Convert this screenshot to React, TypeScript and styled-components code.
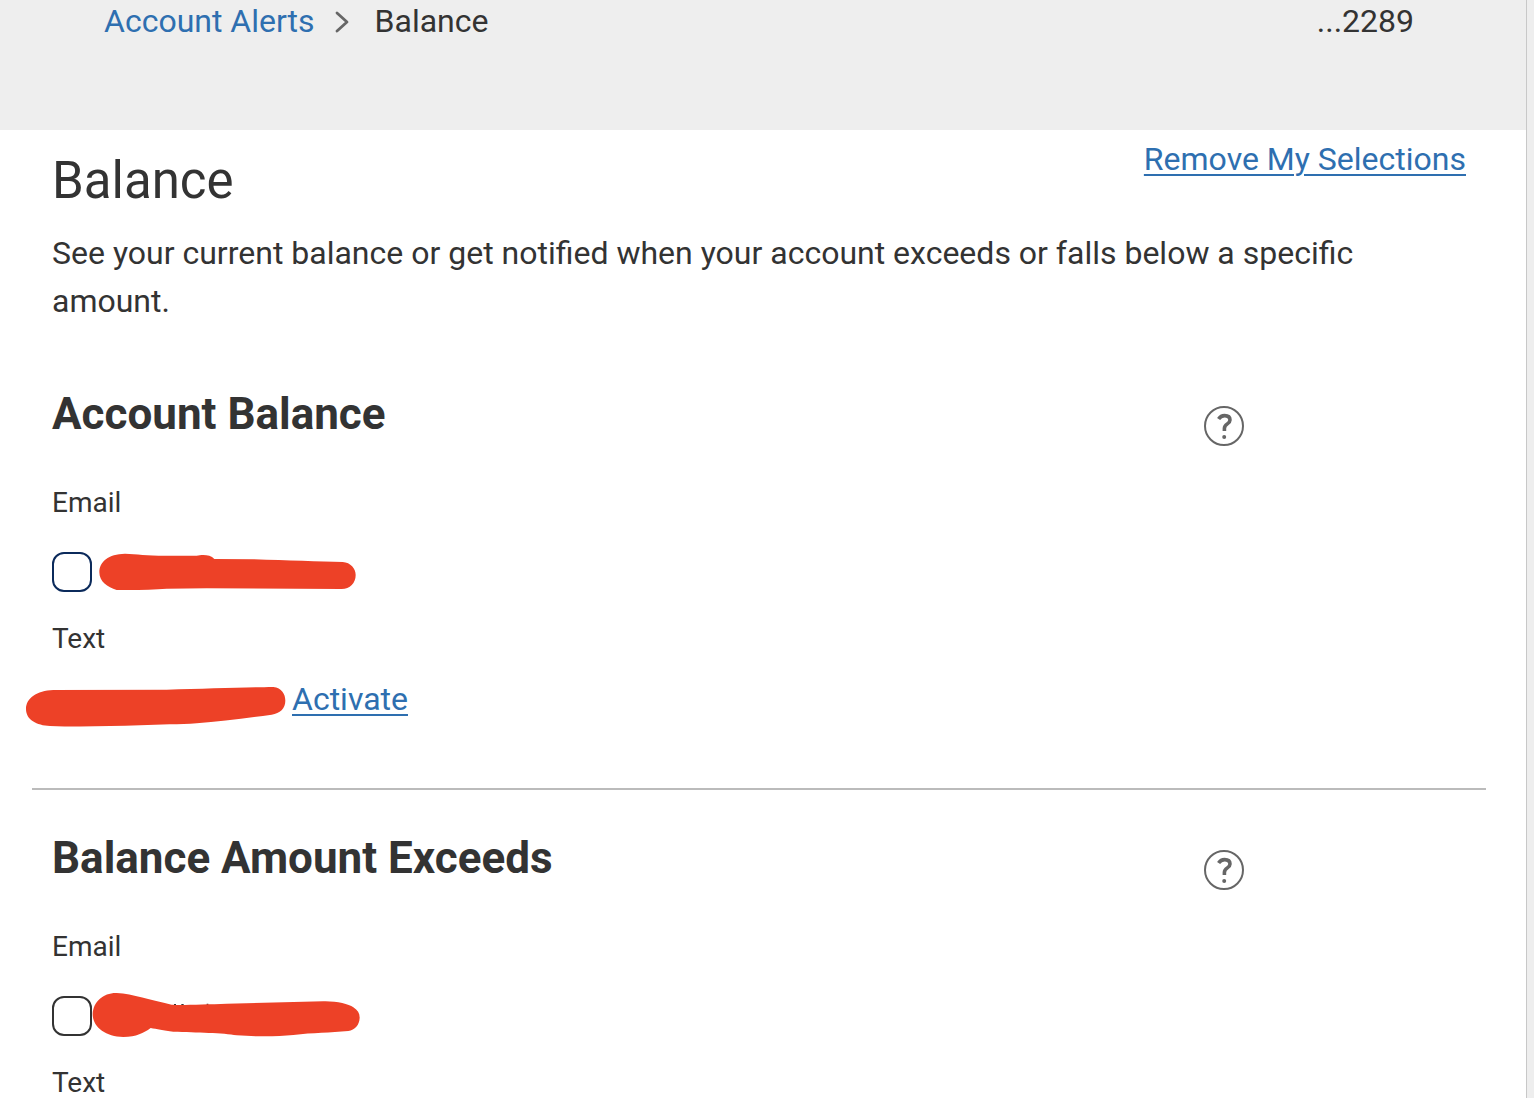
import React from "react";
import styled, { createGlobalStyle } from "styled-components";

const ink = "#333333";
const link = "#2e6fb0";
const redaction = "#ed4127";

const GlobalStyle = createGlobalStyle`
  *, *::before, *::after { box-sizing: border-box; }
  body {
    margin: 0;
    background: #ffffff;
    color: ${ink};
    font-family: Roboto, "Liberation Sans", sans-serif;
    font-size: 32px;
    line-height: 48px;
  }
`;

const Page = styled.div`
  display: flex;
  min-height: 100vh;
`;

const Main = styled.main`
  flex: 1;
  min-width: 0;
`;

const Gutter = styled.div`
  flex: none;
  width: 8px;
  background: #eeeeee;
  border-left: 1px solid #c8c8c8;
`;

const TopBar = styled.header`
  display: flex;
  justify-content: space-between;
  padding: 0 112px 88px 104px;
  background: #eeeeee;
  line-height: 42px;
`;

const Crumbs = styled.nav`
  display: flex;
  align-items: center;
`;

const CrumbArrow = styled.svg`
  margin: 2px 26px 0 20px;
`;

const CrumbLink = styled.a`
  color: ${link};
  text-decoration: none;
`;

const TextLink = styled.a`
  color: ${link};
  text-decoration: underline;
  text-decoration-thickness: 2px;
  text-underline-offset: 4px;
`;

const Content = styled.div`
  padding: 0 40px 0 32px;
`;

const Intro = styled.section`
  padding: 4px 20px 20px;
`;

const IntroHead = styled.div`
  display: flex;
  justify-content: space-between;
  align-items: flex-start;
  line-height: 50px;
`;

const PageTitle = styled.h1`
  margin: 0;
  padding-top: 17px;
  font-size: 51px;
  line-height: 60px;
  font-weight: 400;
`;

const Description = styled.p`
  margin: 18px 0 0;
`;

const AlertSection = styled.section`
  padding: 45px 20px 0;

  & + & {
    border-top: 2px solid #bbbbbb;
    margin-top: 65px;
    padding-top: 44px;
  }
`;

const SectionHead = styled.div`
  display: flex;
  justify-content: space-between;
  align-items: flex-start;
  padding-right: 222px;
`;

const SectionTitle = styled.h2`
  margin: 0;
  font-size: 44px;
  line-height: 48px;
  font-weight: 700;
`;

const HelpButton = styled.button`
  display: block;
  margin: 16px 0 0;
  padding: 0;
  width: 40px;
  height: 40px;
  border: 0;
  background: none;
  cursor: pointer;
`;

const ChannelTitle = styled.h3<{ $top: number }>`
  margin: ${(p) => p.$top}px 0 0;
  font-size: 28px;
  line-height: 30px;
  font-weight: 400;
`;

const Option = styled.label`
  display: flex;
  margin-top: 34px;
  height: 40px;
`;

const Tick = styled.input<{ $edge: string }>`
  appearance: none;
  flex: none;
  margin: 0;
  width: 40px;
  height: 40px;
  border: 2px solid ${(p) => p.$edge};
  border-radius: 12px;
  background: #ffffff;
`;

const PhoneRow = styled.div`
  display: flex;
  margin: 21px 0 0 -28px;
`;

const Scribble = styled.svg`
  display: block;
  flex: none;
  overflow: visible;
  fill: ${redaction};
`;

const HelpIcon = () => (
  <svg width="40" height="40" viewBox="0 0 40 40" fill="none" stroke="#666666" aria-hidden="true">
    <circle cx="20" cy="20" r="19" strokeWidth="2" />
    <path d="M14.6 13C16.2 10.4 18.2 9.6 20.6 9.6C23.8 9.6 26 11.2 26 14C26 18.2 20.4 17.6 20.4 22.4V25" strokeWidth="3.6" />
    <circle cx="20.2" cy="31" r="2" fill="#666666" stroke="none" />
  </svg>
);

const Help = ({ topic }: { topic: string }) => (
  <HelpButton type="button" aria-label={`Help with ${topic}`}>
    <HelpIcon />
  </HelpButton>
);

export default function App() {
  return (
    <>
      <GlobalStyle />
      <Page>
        <Main>
          <TopBar>
            <Crumbs aria-label="Breadcrumb">
              <CrumbLink href="#alerts">Account Alerts</CrumbLink>
              <CrumbArrow width="14" height="22" viewBox="0 0 14 22" fill="none" stroke="#666666" strokeWidth="2.8" aria-hidden="true">
                <path d="M2 2L12 11L2 20" strokeLinejoin="round" strokeLinecap="round" />
              </CrumbArrow>
              <span>Balance</span>
            </Crumbs>
            <span>...2289</span>
          </TopBar>
          <Content>
            <Intro>
              <IntroHead>
                <PageTitle>Balance</PageTitle>
                <TextLink href="#remove">Remove My Selections</TextLink>
              </IntroHead>
              <Description>
                See your current balance or get notified when your account exceeds or falls below a specific amount.
              </Description>
            </Intro>

            <AlertSection>
              <SectionHead>
                <SectionTitle>Account Balance</SectionTitle>
                <Help topic="Account Balance" />
              </SectionHead>
              <ChannelTitle $top={42}>Email</ChannelTitle>
              <Option>
                <Tick type="checkbox" $edge="#0b2a5b" aria-label="Email for account balance" />
                <Scribble width="268" height="40" viewBox="216 36 804 120" aria-hidden="true">
                  <path d="M238 97C238 65 265 42 315 41C350 42 380 47 435 47L530 47C545 44 570 42 583 57L700 58C800 61 900 65 968 66C992 68 1007 85 1007 105C1007 129 990 147 965 147L560 145L440 146C400 149 350 151 290 150C262 142 238 125 238 97Z" />
                </Scribble>
              </Option>
              <ChannelTitle $top={32}>Text</ChannelTitle>
              <PhoneRow>
                <Scribble width="268" height="48" viewBox="12 405 804 144" aria-hidden="true">
                  <path d="M18 507C18 475 50 452 100 450L440 449C560 446 680 442 760 441C785 444 796 462 796 482C796 505 780 520 755 524C680 534 600 544 530 550C480 554 420 553 360 556C270 559 170 561 90 558C50 556 18 540 18 507Z" />
                </Scribble>
                <TextLink href="#activate">Activate</TextLink>
              </PhoneRow>
            </AlertSection>

            <AlertSection>
              <SectionHead>
                <SectionTitle>Balance Amount Exceeds</SectionTitle>
                <Help topic="Balance Amount Exceeds" />
              </SectionHead>
              <ChannelTitle $top={42}>Email</ChannelTitle>
              <Option>
                <Tick type="checkbox" $edge={ink} aria-label="Email for balance amount exceeds" />
                <Scribble width="268" height="40" viewBox="216 48 804 120" aria-hidden="true">
                  <path d="M462 72h6v4h-6zM484 72h7v4h-7zM560 71h5v4h-5z" fill={ink} />
                  <path d="M218 102C220 65 250 38 290 39C340 42 390 60 455 74C480 76 560 73 620 71L910 64C950 63 985 72 1000 82C1013 90 1019 100 1019 113C1018 135 1005 150 985 153C930 158 880 158 820 165C770 170 710 170 650 166C610 158 530 158 460 155C430 152 410 147 392 144C370 160 350 170 310 171C255 170 218 140 218 102Z" />
                </Scribble>
              </Option>
              <ChannelTitle $top={32}>Text</ChannelTitle>
            </AlertSection>
          </Content>
        </Main>
        <Gutter />
      </Page>
    </>
  );
}
